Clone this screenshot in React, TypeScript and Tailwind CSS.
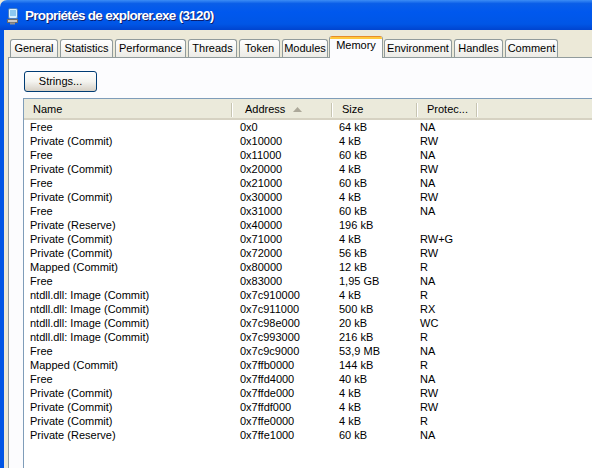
import type { ReactNode } from "react";

type Row = { name: string; address: string; size: string; protect: string };

const rows: Row[] = [
  { name: "Free", address: "0x0", size: "64 kB", protect: "NA" },
  { name: "Private (Commit)", address: "0x10000", size: "4 kB", protect: "RW" },
  { name: "Free", address: "0x11000", size: "60 kB", protect: "NA" },
  { name: "Private (Commit)", address: "0x20000", size: "4 kB", protect: "RW" },
  { name: "Free", address: "0x21000", size: "60 kB", protect: "NA" },
  { name: "Private (Commit)", address: "0x30000", size: "4 kB", protect: "RW" },
  { name: "Free", address: "0x31000", size: "60 kB", protect: "NA" },
  { name: "Private (Reserve)", address: "0x40000", size: "196 kB", protect: "" },
  { name: "Private (Commit)", address: "0x71000", size: "4 kB", protect: "RW+G" },
  { name: "Private (Commit)", address: "0x72000", size: "56 kB", protect: "RW" },
  { name: "Mapped (Commit)", address: "0x80000", size: "12 kB", protect: "R" },
  { name: "Free", address: "0x83000", size: "1,95 GB", protect: "NA" },
  { name: "ntdll.dll: Image (Commit)", address: "0x7c910000", size: "4 kB", protect: "R" },
  { name: "ntdll.dll: Image (Commit)", address: "0x7c911000", size: "500 kB", protect: "RX" },
  { name: "ntdll.dll: Image (Commit)", address: "0x7c98e000", size: "20 kB", protect: "WC" },
  { name: "ntdll.dll: Image (Commit)", address: "0x7c993000", size: "216 kB", protect: "R" },
  { name: "Free", address: "0x7c9c9000", size: "53,9 MB", protect: "NA" },
  { name: "Mapped (Commit)", address: "0x7ffb0000", size: "144 kB", protect: "R" },
  { name: "Free", address: "0x7ffd4000", size: "40 kB", protect: "NA" },
  { name: "Private (Commit)", address: "0x7ffde000", size: "4 kB", protect: "RW" },
  { name: "Private (Commit)", address: "0x7ffdf000", size: "4 kB", protect: "RW" },
  { name: "Private (Commit)", address: "0x7ffe0000", size: "4 kB", protect: "R" },
  { name: "Private (Reserve)", address: "0x7ffe1000", size: "60 kB", protect: "NA" },
];

// tab label + pixel width as measured from the screenshot
const tabs: { label: string; w: string }[] = [
  { label: "General", w: "w-[48px]" },
  { label: "Statistics", w: "w-[53px]" },
  { label: "Performance", w: "w-[71px]" },
  { label: "Threads", w: "w-[49px]" },
  { label: "Token", w: "w-[41px]" },
  { label: "Modules", w: "w-[46px]" },
  { label: "Memory", w: "w-[54px]" },
  { label: "Environment", w: "w-[68px]" },
  { label: "Handles", w: "w-[49px]" },
  { label: "Comment", w: "w-[53px]" },
];

const TitleIcon = () => (
  <svg width="16" height="18" viewBox="0 0 16 18">
    <rect x="3.5" y="1.5" width="9" height="10" rx="1.5" fill="#d8f0ff" stroke="#4a7fc0" />
    <rect x="5" y="3" width="6" height="6" fill="#8cc8f0" />
    <rect x="2.5" y="12.5" width="10" height="3" fill="#c8c8c8" stroke="#6a6a6a" />
    <rect x="5" y="15.5" width="5" height="2" fill="#909090" />
  </svg>
);

const Tab = ({ label, w, active }: { label: string; w: string; active: boolean }) =>
  active ? (
    <div
      className={`${w} h-[22px] -mb-px relative z-10 -mx-[1px] flex flex-col bg-[#fcfcfe] border-x border-[#919b9c] rounded-t-[3px] overflow-hidden`}
    >
      <div className="h-px bg-[#e68b2c]" />
      <div className="h-[2px] bg-[#ffc83c]" />
      <div className="flex-1 flex justify-center pt-[1px]">{label}</div>
    </div>
  ) : (
    <div
      className={`${w} h-[18px] flex justify-center items-center border border-b-0 border-[#919b9c] rounded-t-[3px] bg-gradient-to-b from-[#ffffff] to-[#ecebe6]`}
    >
      {label}
    </div>
  );

const HeaderCell = ({ w, pl, children }: { w: string; pl: string; children?: ReactNode }) => (
  <div className={`${w} ${pl} h-full pt-[2px] flex items-center relative shrink-0`}>
    {children}
    <div className="absolute right-0 top-[4px] h-[14px] w-[2px] border-l border-[#c7c5b2] border-r border-r-white" />
  </div>
);

const App = () => {
  return (
    <div className="w-[592px] h-[468px] overflow-hidden flex flex-col bg-[#ece9d8] font-['Liberation_Sans',Arial,sans-serif] text-[11px] text-black leading-none">
      {/* title bar */}
      <div className="h-[30px] shrink-0 flex items-center gap-[4px] pl-[5px] pt-[1px] rounded-tl-[7px] bg-[linear-gradient(180deg,#3c8df5_0%,#0a5ee8_12%,#0058ee_40%,#0056e6_80%,#0044cf_100%)]">
        <TitleIcon />
        <span className="text-white font-bold text-[13.5px] tracking-[-0.7px] [text-shadow:1px_1px_0_#0a1e70]">
          Propriétés de explorer.exe (3120)
        </span>
      </div>

      <div className="flex-1 flex min-h-0">
        {/* window frame */}
        <div className="w-1 bg-[#0055e5] shrink-0" />

        <div className="flex-1 flex flex-col pl-1 pt-[6px] min-h-0">
          {/* tabs */}
          <div className="h-[21px] flex items-end gap-[2px] pl-[2px] shrink-0">
            {tabs.map(t => (
              <Tab key={t.label} label={t.label} w={t.w} active={t.label === "Memory"} />
            ))}
          </div>

          {/* tab panel */}
          <div className="flex-1 flex flex-col bg-[#fcfcfe] border-l border-t border-[#919b9c] pl-[15px] pt-[13px] min-h-0">
            <button className="w-[73px] h-[21px] shrink-0 rounded-[3px] border border-[#003c74] bg-gradient-to-b from-[#ffffff] via-[#f4f4f0] to-[#d6d0c5] flex items-center justify-center">
              Strings...
            </button>

            {/* list view */}
            <div className="mt-[6px] -ml-px flex-1 flex flex-col bg-white border-l border-t border-[#7f9db9] min-h-0">
              <div className="h-[21px] shrink-0 flex bg-[#ebeadb] border-b-2 border-[#d6d2c2]">
                <HeaderCell w="w-[209px]" pl="pl-[9px]">Name</HeaderCell>
                <HeaderCell w="w-[100px]" pl="pl-[12px]">
                  Address
                  <svg className="ml-[8px]" width="9" height="5" viewBox="0 0 9 5">
                    <polygon points="4.5,0 9,5 0,5" fill="#aca899" />
                  </svg>
                </HeaderCell>
                <HeaderCell w="w-[85px]" pl="pl-[9px]">Size</HeaderCell>
                <HeaderCell w="w-[60px]" pl="pl-[9px]">Protec...</HeaderCell>
              </div>

              <div className="flex flex-col">
                {rows.map((r, i) => (
                  <div key={i} className="h-[14px] flex items-center">
                    <div className="w-[209px] pl-[6px] shrink-0">{r.name}</div>
                    <div className="w-[100px] pl-[7px] shrink-0">{r.address}</div>
                    <div className="w-[85px] pl-[6px] shrink-0">{r.size}</div>
                    <div className="w-[60px] pl-[2px] shrink-0">{r.protect}</div>
                  </div>
                ))}
              </div>
            </div>
          </div>
        </div>
      </div>
    </div>
  );
};

export default App;
